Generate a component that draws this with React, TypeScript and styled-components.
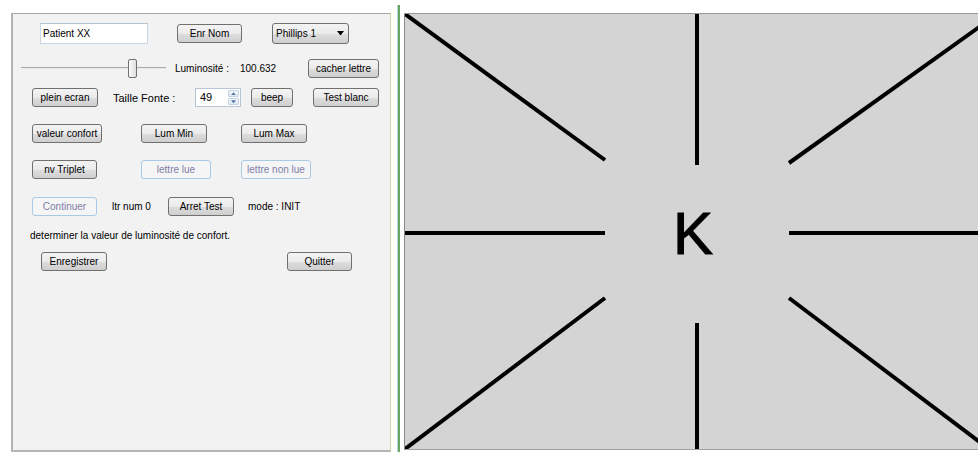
import React from 'react';
import styled, { createGlobalStyle } from 'styled-components';

const GlobalStyle = createGlobalStyle`
  html, body {
    margin: 0;
    padding: 0;
    background: #ffffff;
    overflow: hidden;
  }
  * {
    box-sizing: border-box;
  }
`;

const Page = styled.div`
  display: flex;
  align-items: flex-start;
  width: 978px;
  height: 453px;
  padding: 5px 0 0 11px;
  font-family: 'Liberation Sans', Arial, sans-serif;
  color: #000;
  overflow: hidden;
`;

const ControlPanel = styled.div`
  flex: none;
  display: flex;
  flex-direction: column;
  width: 380px;
  height: 439px;
  margin-top: 8px;
  padding-top: 9px;
  background: #f2f2f2;
  border-top: 1px solid #a8a8a8;
  border-left: 2px solid #b4b4b4;
  border-bottom: 2px solid #b4b4b4;
  border-right: 1px solid #d8d6a4;
`;

const Splitter = styled.div`
  flex: none;
  width: 13px;
  height: 447px;
  display: flex;
  justify-content: center;
  padding-left: 1px;

  &::before {
    content: '';
    width: 3px;
    height: 100%;
    background: linear-gradient(90deg, #b9d3e6 0 1px, #66a85e 1px 3px);
  }
`;

const ViewPanel = styled.div`
  flex: none;
  width: 586px;
  height: 437px;
  margin-top: 8px;
  border-top: 1px solid #999;
  border-left: 1px solid #8a8a8a;
  border-bottom: 1px solid #a0a0a0;
  background: #d4d4d4;
`;

const Canvas = styled.div`
  position: relative;
  width: 584px;
  height: 435px;
  display: flex;
  align-items: center;
  justify-content: center;

  svg {
    position: absolute;
    inset: 0;
  }
`;

const Letter = styled.span`
  position: relative;
  font-family: 'Liberation Sans', Arial, sans-serif;
  font-size: 60px;
  line-height: 60px;
  margin: 4px 8px 0 0;
  color: #000;
  -webkit-text-stroke: 1px #000;
`;

const Row = styled.div<{ $h: number; $mt: number; $pl: number; $cols?: string }>`
  display: grid;
  grid-template-columns: ${(p) => p.$cols || 'auto'};
  justify-items: start;
  align-items: center;
  height: ${(p) => p.$h}px;
  margin-top: ${(p) => p.$mt}px;
  padding-left: ${(p) => p.$pl}px;
`;

const Button = styled.button<{ $w: number }>`
  width: ${(p) => p.$w}px;
  height: 19px;
  padding: 0;
  font-family: 'Liberation Sans', Arial, sans-serif;
  font-size: 10px;
  color: #000;
  border: 1px solid #707070;
  border-radius: 3px;
  background: linear-gradient(#f3f3f3 0%, #ebebeb 50%, #dddddd 51%, #cfcfcf 100%);

  &:disabled {
    color: #7e7ea8;
    border-color: #a9c9e6;
    background: #f5f5f5;
  }
`;

const Label = styled.span<{ $size?: number }>`
  font-size: ${(p) => p.$size || 10}px;
  white-space: nowrap;
  color: #000;
`;

const LineEdit = styled.input`
  width: 108px;
  height: 21px;
  padding: 0 0 0 2px;
  font-family: 'Liberation Sans', Arial, sans-serif;
  font-size: 10px;
  color: #000;
  background: #fff;
  border: 1px solid #c9d6e6;
  border-top-color: #b6c2d0;
  outline: none;
`;

const Combo = styled.div`
  width: 77px;
  height: 21px;
  display: flex;
  align-items: center;
  justify-content: space-between;
  padding: 0 4px 0 3px;
  font-size: 10px;
  border: 1px solid #707070;
  border-radius: 3px;
  background: linear-gradient(#f3f3f3 0%, #ebebeb 50%, #dddddd 51%, #cfcfcf 100%);
`;

const Slider = styled.div`
  width: 145px;
  height: 21px;
  display: flex;
  align-items: center;
  background: linear-gradient(
    transparent 9px,
    #a9a9b4 9px,
    #a9a9b4 10px,
    #e9e9e9 10px,
    #e9e9e9 11px,
    transparent 11px
  );
`;

const Handle = styled.div`
  width: 9px;
  height: 19px;
  margin-left: 107px;
  border: 1px solid #707070;
  border-radius: 2px;
  background: linear-gradient(90deg, #fbfbfb, #dedede);
`;

const SpinBox = styled.div`
  width: 46px;
  height: 19px;
  display: flex;
  align-items: stretch;
  background: #fff;
  border: 1px solid #b7c5d6;
`;

const SpinValue = styled.span`
  flex: 1;
  padding-left: 4px;
  font-size: 11px;
  line-height: 17px;
`;

const SpinArrows = styled.div`
  width: 12px;
  display: flex;
  flex-direction: column;
  gap: 1px;
  padding: 1px 1px 1px 0;
`;

const SpinStep = styled.div`
  flex: 1;
  display: flex;
  align-items: center;
  justify-content: center;
  border: 1px solid #c3d2e3;
  border-radius: 1px;
  background: linear-gradient(#f5f8fc, #dde7f2);
`;

const Arrow = ({ up, color, size }: { up?: boolean; color: string; size: number }) => (
  <svg width={size} height={size / 2 + 1} viewBox="0 0 8 5">
    <path d={up ? 'M0 5 L4 0 L8 5 Z' : 'M0 0 L8 0 L4 5 Z'} fill={color} />
  </svg>
);

const App = () => {
  return (
    <>
      <GlobalStyle />
      <Page>
        <ControlPanel>
          <Row $h={21} $mt={0} $pl={27} $cols="137px 95px auto">
            <LineEdit readOnly value="Patient XX" />
            <Button $w={65}>Enr Nom</Button>
            <Combo>
              Phillips 1
              <Arrow color="#000" size={7} />
            </Combo>
          </Row>
          <Row $h={21} $mt={14} $pl={8} $cols="154px 65px 68px auto">
            <Slider>
              <Handle />
            </Slider>
            <Label>Luminosité :</Label>
            <Label>100.632</Label>
            <Button $w={71}>cacher lettre</Button>
          </Row>
          <Row $h={19} $mt={9} $pl={19} $cols="81px 82px 56px 62px auto">
            <Button $w={66}>plein ecran</Button>
            <Label $size={11}>Taille Fonte :</Label>
            <SpinBox>
              <SpinValue>49</SpinValue>
              <SpinArrows>
                <SpinStep>
                  <Arrow up color="#4d76a8" size={5} />
                </SpinStep>
                <SpinStep>
                  <Arrow color="#4d76a8" size={5} />
                </SpinStep>
              </SpinArrows>
            </SpinBox>
            <Button $w={42}>beep</Button>
            <Button $w={66}>Test blanc</Button>
          </Row>
          <Row $h={19} $mt={17} $pl={19} $cols="109px 100px auto">
            <Button $w={70}>valeur confort</Button>
            <Button $w={66}>Lum Min</Button>
            <Button $w={66}>Lum Max</Button>
          </Row>
          <Row $h={19} $mt={17} $pl={19} $cols="109px 100px auto">
            <Button $w={65}>nv Triplet</Button>
            <Button $w={70} disabled>
              lettre lue
            </Button>
            <Button $w={70} disabled>
              lettre non lue
            </Button>
          </Row>
          <Row $h={19} $mt={18} $pl={19} $cols="80px 56px 80px auto">
            <Button $w={65} disabled>
              Continuer
            </Button>
            <Label>ltr num 0</Label>
            <Button $w={66}>Arret Test</Button>
            <Label>mode : INIT</Label>
          </Row>
          <Row $h={14} $mt={12} $pl={17}>
            <Label>determiner la valeur de luminosité de confort.</Label>
          </Row>
          <Row $h={19} $mt={10} $pl={28} $cols="246px auto">
            <Button $w={66}>Enregistrer</Button>
            <Button $w={65}>Quitter</Button>
          </Row>
        </ControlPanel>
        <Splitter />
        <ViewPanel>
          <Canvas>
            <svg width="584" height="435" viewBox="0 0 584 435">
              <g stroke="#000" strokeWidth={4}>
                <line x1={0} y1={0} x2={200} y2={146} />
                <line x1={292} y1={0} x2={292} y2={151} />
                <line x1={584} y1={6} x2={384} y2={149} />
                <line x1={0} y1={219} x2={200} y2={219} />
                <line x1={384} y1={219} x2={584} y2={219} />
                <line x1={0} y1={435} x2={200} y2={284} />
                <line x1={292} y1={309} x2={292} y2={435} />
                <line x1={384} y1={284} x2={584} y2={435} />
              </g>
            </svg>
            <Letter>K</Letter>
          </Canvas>
        </ViewPanel>
      </Page>
    </>
  );
};

export default App;
